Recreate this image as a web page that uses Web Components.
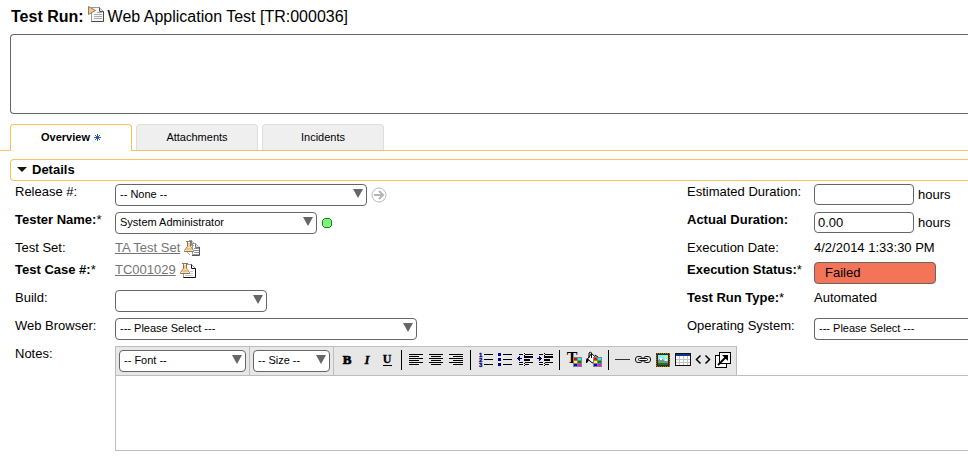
<!DOCTYPE html>
<html lang="en">
<head>
<meta charset="utf-8">
<title>Test Run Details</title>
<style>
  html, body { margin: 0; min-height: 100%; background: #fff; }
  body { overflow-x: hidden; color: #000; font: 13px/16px "Liberation Sans", Arial, sans-serif; }
</style>
</head>
<body>
<test-run-page></test-run-page>

<script>
/* ---------- icons ---------- */
const lines = (rows, x = 0, color = '#000') =>
  rows.map(([y, w, dx = 0]) => `<rect x="${x + dx}" y="${y}" width="${w}" height="1" fill="${color}"/>`).join('');

const swatches = (x, y) => `<rect x="${x}" y="${y}" width="9" height="10" fill="#808080"/>` +
  ['#f00', '#0ff', '#ff0', '#008000', '#00f', '#f0f'].map((c, i) =>
    `<rect x="${x + 1 + (i % 2) * 4}" y="${y + 1 + (i >> 1) * 3}" width="3" height="2" fill="${c}"/>`).join('');

const sheet = (x, y, w, h) => `
  <path d="M${x + .5} ${y + .5}h${w - 5}l4 4v${h - 5}h-${w - 1}z" fill="#fff" stroke="#999"/>
  <path d="M${x + w - 4.5} ${y + .5}v4h4" fill="#ddd" stroke="#777"/>`;

const flask = `<path d="M3.500 1.500v5L.5 10.500v1h9v-1l-3-4v-5z" fill="#fff" stroke="#8a7657"/>
  <path d="M3.500 7.500h3l2 3h-7z" fill="#f9bd63"/><path d="M4 3h2v4H4z" fill="#f9cf90"/><path d="M2 1.500h6" stroke="#8a7657"/>`;

const serif = 'font-family="Liberation Serif, serif" font-weight="bold" text-anchor="middle"';
const crisp = s => `<g shape-rendering="crispEdges">${s}</g>`;

/* paragraph lines shared by the indent and outdent icons */
const paragraph = lines([[2, 4, 2], [2, 8, 8], [4, 9, 7], [5, 9, 7], [7, 6, 7], [8, 6, 7],
  [10, 4, 2], [10, 8, 8], [12, 4, 2], [12, 4, 8]]) + lines([[1, 1], [3, 1], [11, 1], [13, 1]], 7);

const ICONS = {
  run: `<path d="M3.500 1.500h8l4 4v10h-12z" fill="#f7f7f7" stroke="#999"/>
    <path d="M15.500 5.500v10h-12" fill="none" stroke="#444"/><path d="M11.500 1.500v4h4" fill="#ddd" stroke="#555"/>
    ${crisp(lines([[6, 5, 3], [8, 8], [10, 8], [12, 8]], 6, '#aaa'))}
    <path d="M.5.5v8l7-4z" fill="#f9c680" stroke="#8e7b65"/>`,
  testset: `${sheet(5, 0, 7, 12)}${sheet(8, 3, 8, 12)}
    ${crisp(lines([[3, 3], [5, 3]], 7, '#8b93a0') + lines([[8, 5], [10, 5], [12, 5]], 10, '#8b93a0'))}
    <path d="M15.500 7v8.500H8" fill="none" stroke="#555"/><path d="M3 12l3 3" stroke="#aaa"/>${flask}`,
  testcase: `<path d="M3.500 2.500h8l4 4v9h-12z" fill="#fff" stroke="#999"/>
    <path d="M11.500 2.500v4h4v9h-12" fill="none" stroke="#111"/>${crisp(lines([[9, 3, 5], [11, 3, 5], [13, 8]], 5, '#ccc'))}${flask}`,
  go: `<circle cx="8" cy="8" r="7" fill="#fff" stroke="#bbb"/><path d="M3 8h9M8 4l4 4-4 4" fill="none" stroke="#b5b5b5" stroke-width="2"/>`,
  online: `<path d="M3.500 1.500h5l2 2v5l-2 2h-5l-2-2v-5z" fill="#7bf57b" stroke="#168116"/>`,
  caret: `<path d="M0 0h10L5 5z" fill="#1b1408"/>`,
  asterisk: `<path d="M3.500 0v7M0 3.500h7M1 1l5 5M6 1L1 6" stroke="#2f5b9c"/>`,
  arrow: `<path d="M0 0h10L5 9z" fill="#666"/>`,

  bold: `<text x="8" y="12" font-size="13" stroke="#000" stroke-width=".7" ${serif}>B</text>`,
  italic: `<text x="8" y="12" font-size="13" font-style="italic" stroke="#000" stroke-width=".3" ${serif}>I</text>`,
  underline: `<text x="8" y="11" font-size="12" stroke="#000" stroke-width=".3" ${serif}>U</text><rect x="4" y="13" width="9" height="1"/>`,
  left: crisp(lines([[2, 14], [4, 10], [6, 14], [8, 10], [10, 14], [12, 10]], 1)),
  center: crisp(lines([[2, 14], [4, 10, 2], [6, 14], [8, 10, 2], [10, 14], [12, 10, 2]], 1)),
  right: crisp(lines([[2, 14], [4, 10, 4], [6, 14], [8, 10, 4], [10, 14], [12, 10, 4]], 1)),
  numbers: `<g font-family="Liberation Sans, sans-serif" font-size="6" font-weight="bold" fill="#000080" stroke="#000080" stroke-width=".3">
      <text x="2" y="5">1</text><text x="2" y="10">2</text><text x="2" y="15">3</text></g>
    ${crisp(lines([[2, 9], [7, 9], [12, 9]], 7))}`,
  bullets: crisp(`<path d="M1 1h3v3H1zM1 6h3v3H1zM1 11h3v3H1z" fill="#000080"/>` + lines([[2, 9], [7, 9], [12, 9]], 6)),
  outdent: crisp(`<path d="M0 6h1V5h1V4h1v2h2v1H3v2H2V8H1V7H0z" fill="#000080"/>` + paragraph),
  indent: crisp(`<path d="M0 6h2V4h1v1h1v1h1v1H4v1H3v1H2V7H0z" fill="#000080"/>` + paragraph),
  color: `<text x="6" y="11" font-size="16" ${serif}>T</text>${crisp(swatches(7, 5))}`,
  fill: `<path d="M5.500 1.500l5 4.500-4 5-5-4z" fill="#fff" stroke="#000"/><path d="M5.500 6V1l-1-1L3 1v5" fill="none" stroke="#000"/>
    <path d="M1 6l2 2-2 3H0V8z" fill="#000"/><path d="M9 3l3 2v2" fill="none" stroke="#000"/>${crisp(swatches(7, 5))}`,
  rule: crisp(`<rect x="0" y="7" width="15" height="1" fill="#333"/>`),
  link: `<g fill="#e7e7e7" stroke="#111"><rect x=".5" y="4.500" width="7" height="6" rx="2.500"/><rect x="8.500" y="4.500" width="7" height="6" rx="2.500"/>
    <rect x="3.500" y="6.500" width="9" height="2" rx="1" fill="#fff"/></g>`,
  picture: crisp(`<rect x="1" y="1" width="14" height="14" fill="#3a2a08"/>
    <path d="M1.500 1.500h13v13h-13z" fill="none" stroke="#a0701c" stroke-dasharray="1 1"/>
    <rect x="3" y="3" width="10" height="10" fill="#7df2ff"/><path d="M3 12V9l3-4 3 4 2-2 2 3v2z" fill="#8a8a8a"/>
    <path d="M5 8l1-2 1 2M10 9l1-2 1 2" fill="none" stroke="#fff"/><rect x="10" y="4" width="2" height="2" fill="#ff0"/>
    <rect x="3" y="11" width="10" height="2" fill="#008020"/>`),
  table: crisp(`<rect x="0" y="1" width="16" height="13" fill="#111"/><rect x="1" y="2" width="14" height="2" fill="#0b36a0"/>
    <rect x="1" y="4" width="14" height="9" fill="#fff"/><path d="M1 7.500h14M1 10.500h14M4.500 4v9M8.500 4v9M12.500 4v9" stroke="#c4c4c4"/>`),
  source: `<path d="M5.500 3.500l-4 4 4 4M10.500 3.500l4 4-4 4" fill="none" stroke="#000" stroke-width="1.500"/>`,
  popout: crisp(`<rect x=".5" y="3.500" width="11" height="12" fill="#fff" stroke="#000"/>
    <rect x="4.500" y=".5" width="11" height="11" fill="#fff" stroke="#000"/>`) +
    `<path d="M3 13l9-9" stroke="#000" stroke-width="2"/><path d="M7 3h6v6z" fill="#000"/>`
};

class UiIcon extends HTMLElement {
  connectedCallback() {
    const w = this.getAttribute('w') || 16, h = this.getAttribute('h') || 16;
    this.attachShadow({ mode: 'open' }).innerHTML = `
      <style>:host { display: inline-block; flex: none; } svg { display: block; overflow: visible; }</style>
      <svg width="${w}" height="${h}" viewBox="0 0 ${w} ${h}" aria-hidden="true">${ICONS[this.getAttribute('name')]}</svg>`;
  }
}
customElements.define('ui-icon', UiIcon);

/* ---------- form fields ---------- */
const FIELD_CSS = `
  :host { display: grid; grid-template-columns: var(--label-width, 100px) minmax(0, 1fr); align-items: start; min-height: var(--row, 28px); box-sizing: border-box; }
  label, .label { padding-top: 3px; white-space: nowrap; }
  :host([strong]) .name { font-weight: bold; }
  .control { display: flex; align-items: center; gap: 4px; padding-top: 3px; white-space: nowrap; }
`;
const SELECT_CSS = `
  .select { display: inline-grid; flex: none; width: var(--w); height: 22px; align-items: start; }
  .select > * { grid-area: 1 / 1; }
  .select ui-icon { justify-self: end; margin: 5px 4px 0 0; pointer-events: none; }
  select { appearance: none; box-sizing: border-box; width: 100%; height: 22px; margin: 0; padding: 0 18px 2px 4px;
    border: 1px solid #666; border-radius: 4px; background: #fff; color: #000;
    font: 11px/16px "Liberation Sans", Arial, sans-serif; }
  :host([bleed]) .select { width: 100%; }
  :host([bleed]) select { border-right: 0; border-radius: 4px 0 0 4px; }
  :host([bleed]) .select ui-icon { display: none; }
`;
const selectMarkup = (id, value, width, aria = '') => `
  <span class="select" style="--w:${width}px"><select id="${id}" ${aria}><option>${value}</option></select>
  <ui-icon name="arrow" w="10" h="9"></ui-icon></span>`;

class BaseField extends HTMLElement {
  connectedCallback() {
    const star = this.hasAttribute('required') ? '*' : '';
    const name = `<span class="name">${this.getAttribute('label')}</span>${star}`;
    this.attachShadow({ mode: 'open' }).innerHTML = `<style>${FIELD_CSS}${this.css || ''}</style>
      ${this.plain ? `<span class="label">${name}</span>` : `<label for="control">${name}</label>`}
      <div class="control">${this.control()}</div>`;
  }
}
customElements.define('select-field', class extends BaseField {
  css = SELECT_CSS;
  control() { return selectMarkup('control', this.getAttribute('value') || '', this.getAttribute('size')) + '<slot></slot>'; }
});
customElements.define('text-field', class extends BaseField {
  css = `input { box-sizing: border-box; width: 100px; height: 21px; margin: 0; padding: 0 3px; border: 1px solid #666; border-radius: 4px;
    background: #fff; color: inherit; font: inherit; }`;
  control() { return `<input id="control" type="text" value="${this.getAttribute('value') || ''}"><slot></slot>`; }
});
customElements.define('static-field', class extends BaseField {
  plain = true;
  css = `::slotted(a) { color: #757575; text-decoration: underline; }`;
  control() { return '<slot></slot>'; }
});
customElements.define('status-field', class extends BaseField {
  plain = true;
  css = `.status { box-sizing: border-box; width: 122px; height: 22px; padding: 2px 10px; border: 1px solid #666; border-radius: 4px; background: #f47458; }`;
  control() { return '<span class="status"><slot></slot></span>'; }
});

/* ---------- rich text editor ---------- */
customElements.define('rich-editor', class extends HTMLElement {
  connectedCallback() {
    const groups = [
      [['bold', 'Bold'], ['italic', 'Italic'], ['underline', 'Underline']],
      [['left', 'Align left'], ['center', 'Center'], ['right', 'Align right']],
      [['numbers', 'Numbered list'], ['bullets', 'Bulleted list'], ['outdent', 'Outdent'], ['indent', 'Indent']],
      [['color', 'Text color'], ['fill', 'Background color']],
      [['rule', 'Horizontal rule'], ['link', 'Link'], ['picture', 'Image'], ['table', 'Table'], ['source', 'Source'], ['popout', 'Full screen']]
    ];
    const buttons = groups.map(g => g.map(([icon, title]) =>
      `<button type="button" aria-label="${title}"><ui-icon name="${icon}"></ui-icon></button>`).join('')).join('<i></i>');
    this.attachShadow({ mode: 'open' }).innerHTML = `<style>${FIELD_CSS}${SELECT_CSS}
      .control { display: block; }
      .toolbar { display: flex; width: max-content; background: #e7e7e7; border: solid #bdbdbd; border-width: 1px 0 0 1px; }
      .cell { display: flex; align-items: flex-start; padding: 3px; border-right: 1px solid #bdbdbd; }
      button { display: grid; place-items: center; width: 20px; height: 20px; padding: 0; border: 0; background: none; }
      i { width: 1px; height: 20px; margin: 0 4px; background: #000; }
      textarea { display: block; box-sizing: border-box; width: 100%; height: 76px; margin: 0; padding: 4px; resize: none; border: 1px solid #bdbdbd;
        border-right: 0; border-radius: 0; background: #fff; font: inherit; }
      </style>
      <label for="notes">Notes:</label>
      <div class="control">
        <div class="toolbar">
          <span class="cell">${selectMarkup('font', '-- Font --', 127, 'aria-label="Font"')}</span>
          <span class="cell">${selectMarkup('size', '-- Size --', 77, 'aria-label="Size"')}</span>
          <span class="cell">${buttons}</span>
        </div>
        <textarea id="notes"></textarea>
      </div>`;
  }
});

/* ---------- tabs and section header ---------- */
customElements.define('tab-button', class extends HTMLElement {
  connectedCallback() {
    this.attachShadow({ mode: 'open' }).innerHTML = `<style>
      :host { display: block; width: 122px; }
      button { display: flex; align-items: center; justify-content: center; gap: 4px; box-sizing: border-box; width: 100%; height: 26px; padding: 0 0 1px;
        border: 1px solid #dedede; border-bottom: 0; border-radius: 4px 4px 0 0; background: #efefef; color: #000;
        font: 11px/16px "Liberation Sans", Arial, sans-serif; }
      :host([selected]) button { height: 27px; padding-bottom: 2px; background: #fff; border-color: #f5c15f; font-weight: bold; }
      </style><button type="button" role="tab"><slot></slot></button>`;
  }
});
customElements.define('tab-strip', class extends HTMLElement {
  connectedCallback() {
    this.attachShadow({ mode: 'open' }).innerHTML = `<style>
      :host { display: block; }
      div { display: flex; gap: 4px; height: 26px; padding: 0 10px; border-bottom: 1px solid #f5c15f; }
      </style><div role="tablist"><slot></slot></div>`;
  }
});
customElements.define('section-header', class extends HTMLElement {
  connectedCallback() {
    this.attachShadow({ mode: 'open' }).innerHTML = `<style>
      :host { display: block; }
      button { display: flex; align-items: center; gap: 5px; box-sizing: border-box; width: 100%; height: 22px; padding: 0 6px 1px;
        border: 1px solid #f5c15f; border-right: 0; border-radius: 4px 0 0 4px; background: #fff; color: #000;
        font: bold 13px/16px "Liberation Sans", Arial, sans-serif; }
      </style><button type="button" aria-expanded="true"><ui-icon name="caret" w="10" h="5"></ui-icon><slot></slot></button>`;
  }
});

/* ---------- page ---------- */
customElements.define('test-run-page', class extends HTMLElement {
  connectedCallback() {
    this.attachShadow({ mode: 'open' }).innerHTML = `<style>
      :host { display: block; }
      h1 { display: flex; align-items: center; gap: 4px; height: 34px; box-sizing: border-box; margin: 0; padding: 0 11px; font-size: 16px; line-height: 20px; font-weight: normal; }
      h1 ui-icon { margin-bottom: 6px; }
      .description { display: block; box-sizing: border-box; width: calc(100% - 10px); height: 80px; margin: 0 0 10px 10px; padding: 4px; resize: none;
        border: 1px solid #666; border-right: 0; border-radius: 4px 0 0 4px; background: #fff; font: inherit; }
      section-header { margin: 8px 0 0 10px; }
      .columns { display: grid; grid-template-columns: minmax(0, 1fr) 281px; padding-left: 15px; }
      .short { --row: 22px; }
      .right { --label-width: 127px; }
      rich-editor { margin-left: 15px; }
      </style>
      <h1><b>Test Run:</b><ui-icon name="run"></ui-icon><span>Web Application Test [TR:000036]</span></h1>
      <textarea class="description" aria-label="Description"></textarea>
      <tab-strip>
        <tab-button selected>Overview<ui-icon name="asterisk" w="7" h="7"></ui-icon></tab-button>
        <tab-button>Attachments</tab-button>
        <tab-button>Incidents</tab-button>
      </tab-strip>
      <section-header>Details</section-header>
      <div class="columns">
        <div>
          <select-field label="Release #:" value="-- None --" size="252"><ui-icon name="go"></ui-icon></select-field>
          <select-field label="Tester Name:" strong required value="System Administrator" size="202"><ui-icon name="online" w="12" h="12"></ui-icon></select-field>
          <static-field class="short" label="Test Set:"><a href="#test-set">TA Test Set</a><ui-icon name="testset"></ui-icon></static-field>
          <static-field label="Test Case #:" strong required><a href="#test-case">TC001029</a><ui-icon name="testcase"></ui-icon></static-field>
          <select-field label="Build:" size="152"></select-field>
          <select-field label="Web Browser:" value="--- Please Select ---" size="302"></select-field>
        </div>
        <div class="right">
          <text-field label="Estimated Duration:">hours</text-field>
          <text-field label="Actual Duration:" strong value="0.00">hours</text-field>
          <static-field class="short" label="Execution Date:">4/2/2014 1:33:30 PM</static-field>
          <status-field label="Execution Status:" strong required>Failed</status-field>
          <static-field label="Test Run Type:" strong required>Automated</static-field>
          <select-field bleed label="Operating System:" value="--- Please Select ---" size="302"></select-field>
        </div>
      </div>
      <rich-editor></rich-editor>`;
  }
});
</script>
</body>
</html>
